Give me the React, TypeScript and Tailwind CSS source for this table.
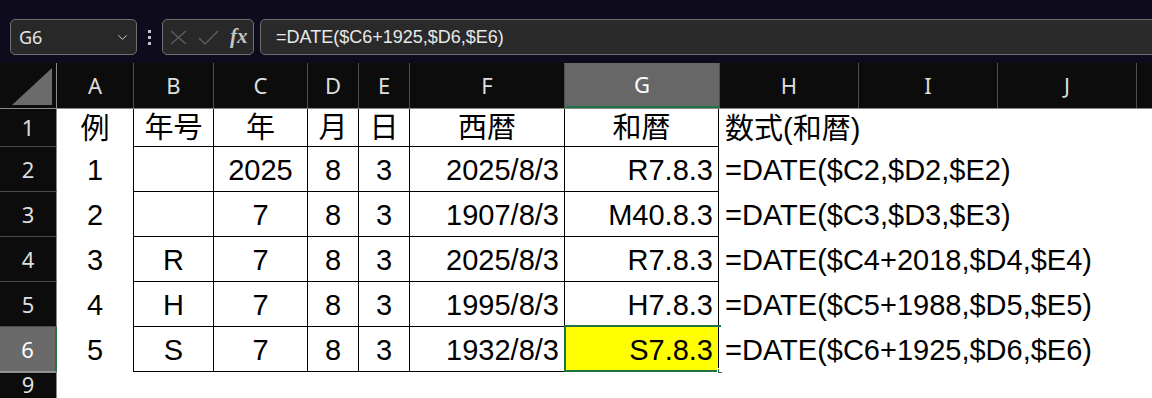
import React from "react";
import { ChevronDown } from "lucide-react";

const COLS = [
  { key: "A", w: "w-[76px]" },
  { key: "B", w: "w-[80px]" },
  { key: "C", w: "w-[94px]" },
  { key: "D", w: "w-[51px]" },
  { key: "E", w: "w-[51px]" },
  { key: "F", w: "w-[155px]" },
  { key: "G", w: "w-[155px]" },
  { key: "H", w: "w-[139px]" },
  { key: "I", w: "w-[139px]" },
  { key: "J", w: "w-[139px]" },
];

// 例 / 年号 / 年 / 月 / 日 / 西暦 / 和暦 / 数式
const ROWS: string[][] = [
  ["例", "年号", "年", "月", "日", "西暦", "和暦", "数式(和暦)"],
  ["1", "", "2025", "8", "3", "2025/8/3", "R7.8.3", "=DATE($C2,$D2,$E2)"],
  ["2", "", "7", "8", "3", "1907/8/3", "M40.8.3", "=DATE($C3,$D3,$E3)"],
  ["3", "R", "7", "8", "3", "2025/8/3", "R7.8.3", "=DATE($C4+2018,$D4,$E4)"],
  ["4", "H", "7", "8", "3", "1995/8/3", "H7.8.3", "=DATE($C5+1988,$D5,$E5)"],
  ["5", "S", "7", "8", "3", "1932/8/3", "S7.8.3", "=DATE($C6+1925,$D6,$E6)"],
];

const cellFont = "font-['Liberation_Sans','Noto_Sans_CJK_JP',sans-serif] text-[29px] leading-none text-black";
const uiFont = "font-['Noto_Sans','Liberation_Sans',sans-serif]";

function Toolbar() {
  return (
    <div className="h-[63px] bg-[#0e0b1c] flex items-start pt-[19px] pl-[10px] overflow-hidden">
      {/* name box */}
      <div className="w-[127px] h-[36px] shrink-0 rounded-[5px] border border-[#6e6e6e] bg-[#282828] flex items-center pl-[8px] pr-[6px]">
        <span className={`${uiFont} text-[18px] text-[#e4e4e4] flex-1`}>G6</span>
        <ChevronDown className="w-[15px] h-[15px] text-[#cfcfcf]" strokeWidth={1.6} />
      </div>
      {/* dots */}
      <div className="w-[25px] h-[36px] shrink-0 flex flex-col items-center justify-center gap-[3px]">
        <span className="w-[3px] h-[3px] bg-[#c4c4c4]" />
        <span className="w-[3px] h-[3px] bg-[#c4c4c4]" />
        <span className="w-[3px] h-[3px] bg-[#c4c4c4]" />
      </div>
      {/* cancel / enter / fx */}
      <div className="w-[92px] h-[36px] shrink-0 rounded-[5px] border border-[#6e6e6e] bg-[#282828] flex items-center pl-[7px] gap-[11px]">
        <svg width="17" height="15" viewBox="0 0 17 15" fill="none" stroke="#5e5e5e" strokeWidth="1.4">
          <path d="M1 1 L16 14 M16 1 L1 14" />
        </svg>
        <svg width="21" height="15" viewBox="0 0 21 15" fill="none" stroke="#5e5e5e" strokeWidth="1.4">
          <path d="M1 8 L7 14 L20 1" />
        </svg>
        <span className="font-['Liberation_Serif',serif] italic font-bold text-[21px] leading-none text-[#c4c4c4] -mt-[2px]">fx</span>
      </div>
      {/* formula bar */}
      <div className="ml-[6px] w-[920px] h-[36px] shrink-0 rounded-l-[5px] border border-[#6e6e6e] bg-[#2a2a2a] flex items-center pl-[15px]">
        <span className="font-['Liberation_Sans',sans-serif] text-[18px] text-[#e8e8e8]">=DATE($C6+1925,$D6,$E6)</span>
      </div>
    </div>
  );
}

function ColumnHeader() {
  return (
    <div className="h-[46px] flex bg-[#0c0c0c] border-b border-[#8a8a8a]">
      <div className="w-[57px] shrink-0 border-r border-[#8a8a8a] flex items-end justify-end pr-[4px] pb-[3px]">
        <svg width="40" height="37" viewBox="0 0 40 37">
          <polygon points="0,37 40,0 40,37" fill="#6b6b6b" />
        </svg>
      </div>
      {COLS.map((c, i) => {
        const sel = c.key === "G";
        return (
          <div
            key={c.key}
            className={`${c.w} shrink-0 flex items-center justify-center ${uiFont} text-[22px] ${
              i > 0 ? "border-l border-[#4e4e4e]" : ""
            } ${sel ? "bg-[#676767] text-white border-b-2 border-b-[#217346]" : "text-[#dedede]"}`}
          >
            {c.key}
          </div>
        );
      })}
      <div className="flex-1 border-l border-[#4e4e4e]" />
    </div>
  );
}

function RowHeader({ label, h, selected }: { label: string; h: string; selected?: boolean }) {
  return (
    <div
      className={`w-[57px] shrink-0 ${h} flex items-center justify-center ${uiFont} text-[22px] border-b ${
        selected
          ? "bg-[#6a6a6a] text-white border-r-2 border-r-[#217346] border-b-[#9a9a9a]"
          : "bg-[#0c0c0c] text-[#dedede] border-r border-r-[#8a8a8a] border-b-[#4a4a4a]"
      }`}
    >
      {label}
    </div>
  );
}

function DataRow({ cells, rowNo, h }: { cells: string[]; rowNo: number; h: string }) {
  const align = (i: number) => {
    if (i === 7) return "justify-start pl-[6px]";
    if (rowNo > 1 && (i === 5 || i === 6)) return "justify-end pr-[5px]";
    return "justify-center";
  };
  return (
    <div className={`flex ${h}`}>
      <RowHeader label={String(rowNo)} h={h} selected={rowNo === 6} />
      {cells.map((t, i) => {
        const bordered = i >= 1 && i <= 6;
        const selCell = rowNo === 6 && i === 6;
        return (
          <div
            key={i}
            className={`${COLS[i].w} shrink-0 relative flex items-center whitespace-nowrap ${align(i)} ${cellFont} ${
              bordered ? "border-l border-b border-black" : ""
            } ${i === 6 ? "border-r" : ""} ${selCell ? "bg-[#ffff00]" : "bg-white"}`}
          >
            <span className="pt-[2px]">{t}</span>
            {selCell && (
              <div className="absolute left-[-1px] top-[-2px] w-[157px] h-[47px] border-2 border-[#217346]">
                <div className="absolute right-[-4px] bottom-[-4px] w-[6px] h-[6px] bg-[#217346] border border-white" />
              </div>
            )}
          </div>
        );
      })}
      <div className="flex-1 bg-white" />
    </div>
  );
}

export default function App() {
  return (
    <div className="w-[1152px] h-[398px] overflow-hidden bg-white">
      <Toolbar />
      <ColumnHeader />
      {ROWS.map((r, i) => (
        <DataRow key={i} cells={r} rowNo={i + 1} h={i === 0 ? "h-[38px]" : "h-[45px]"} />
      ))}
      <div className="flex h-[26px]">
        <div className={`w-[57px] shrink-0 h-full bg-[#0c0c0c] border-t border-[#8a8a8a] border-r border-r-[#8a8a8a] flex items-center justify-center ${uiFont} text-[22px] text-[#dedede]`}>
          <span className="leading-none -mt-[3px]">9</span>
        </div>
        <div className="flex-1 bg-white" />
      </div>
    </div>
  );
}
